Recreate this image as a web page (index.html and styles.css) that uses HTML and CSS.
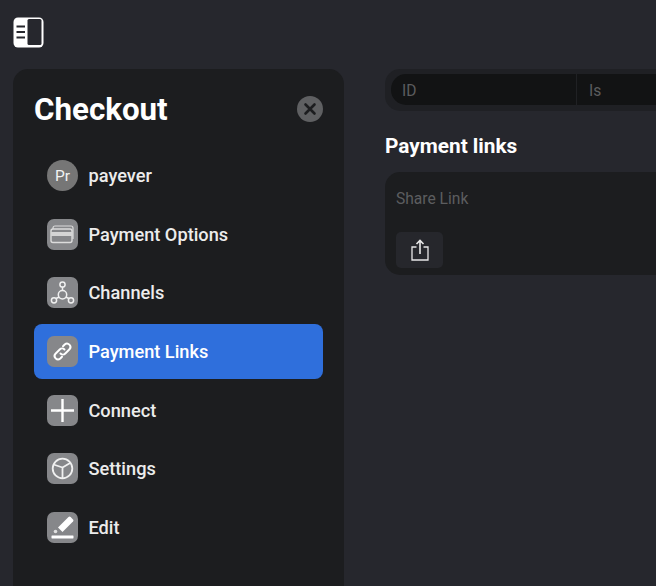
FILE: index.html
```html
<!DOCTYPE html>
<html lang="en">
<head>
<meta charset="utf-8">
<title>Checkout</title>
<link rel="stylesheet" href="styles.css">
</head>
<body>
<header class="topbar">
  <svg class="panel-icon" viewBox="0 0 31 31" width="31" height="31">
    <rect x="0.500" y="0.500" width="30" height="30" rx="4.500" fill="#fff"/>
    <rect x="14.500" y="2" width="14" height="26" rx="1.500" fill="#26272d"/>
    <path d="M3.500 9.400h8.500M3.500 15h8.500M3.500 20.400h8.500" stroke="#26272d" stroke-width="2" fill="none"/>
  </svg>
</header>
<div class="layout">
  <aside class="sidebar">
    <div class="side-head">
      <h1 class="side-title">Checkout</h1>
      <button class="close-btn" aria-label="Close">
        <svg viewBox="0 0 26 26" width="26" height="26"><path d="M8.500 8.500l9 9M17.500 8.500l-9 9" stroke="#1c1d1f" stroke-width="2.600" stroke-linecap="round" fill="none"/></svg>
      </button>
    </div>
    <nav class="menu">
      <a class="item"><span class="ico ico-round">Pr</span><span class="label">payever</span></a>
      <a class="item"><span class="ico">
        <svg viewBox="0 0 31 31" width="31" height="31" fill="none" stroke="#dcdcdc"><path d="M6 10V9a2 2 0 0 1 2-2h16a2 2 0 0 1 2 2v11" stroke-width="1.200"/><rect x="4" y="10" width="21" height="13.500" rx="2" stroke-width="1.400"/><rect x="4" y="13" width="21" height="4" fill="#d4d4d4" stroke="none"/></svg>
      </span><span class="label">Payment Options</span></a>
      <a class="item"><span class="ico">
        <svg viewBox="0 0 31 31" width="31" height="31" fill="none" stroke="#f0f0f0" stroke-width="1.500"><circle cx="15.500" cy="7.500" r="2.600"/><circle cx="7" cy="23.300" r="2.600"/><circle cx="24" cy="23.300" r="2.600"/><path d="M15.500 10.100v3.400M12.300 20l-3.200 1.500M18.700 20l3.200 1.500"/><circle cx="15.500" cy="17.700" r="4.200"/></svg>
      </span><span class="label">Channels</span></a>
      <a class="item item-active"><span class="ico">
        <svg viewBox="0 0 31 31" width="31" height="31" fill="none" stroke="#fff" stroke-width="2" stroke-linecap="round" stroke-linejoin="round"><path d="M13.500 17.500a3.400 3.400 0 0 0 4.800 0l4.200-4.200a3.400 3.400 0 0 0-4.800-4.800l-1.700 1.700"/><path d="M17.500 13.500a3.400 3.400 0 0 0-4.800 0l-4.200 4.200a3.400 3.400 0 0 0 4.800 4.800l1.700-1.700"/></svg>
      </span><span class="label">Payment Links</span></a>
      <a class="item"><span class="ico">
        <svg viewBox="0 0 31 31" width="31" height="31"><path d="M15.500 4v23M4 15.500h23" stroke="#fff" stroke-width="2.400" fill="none"/></svg>
      </span><span class="label">Connect</span></a>
      <a class="item"><span class="ico">
        <svg viewBox="0 0 31 31" width="31" height="31" fill="none" stroke="#f0f0f0" stroke-width="1.800"><circle cx="15.500" cy="15.500" r="9.800"/><path d="M15.500 14.500L6.500 11.500M15.500 14.500L24 9.500M15.500 14.500V25"/></svg>
      </span><span class="label">Settings</span></a>
      <a class="item"><span class="ico">
        <svg viewBox="0 0 31 31" width="31" height="31"><path d="M11 15.500L21.500 5a1.500 1.500 0 0 1 2.100 0l2.400 2.400a1.500 1.500 0 0 1 0 2.100L15.500 20z" fill="#fff"/><circle cx="8.500" cy="19.500" r="1.800" fill="#e0e0e0"/><rect x="4.500" y="23.500" width="22" height="3" rx=".4" fill="#fff"/></svg>
      </span><span class="label">Edit</span></a>
    </nav>
  </aside>
  <main class="content">
    <div class="filter-bar">
      <div class="filter-inner">
        <span class="filter-cell filter-id">ID</span>
        <span class="filter-cell filter-is">Is</span>
      </div>
    </div>
    <h2 class="section-title">Payment links</h2>
    <section class="link-card">
      <div class="link-label">Share Link</div>
      <button class="share-btn" aria-label="Share">
        <svg viewBox="0 0 18 22" width="18" height="22" fill="none" stroke="#e8e8e8" stroke-width="1.300"><path d="M5.500 8H1v13h16V8h-4.500"/><path d="M9 15V1.500M5.500 5L9 1.500 12.500 5" stroke-width="1.600"/></svg>
      </button>
    </section>
  </main>
</div>
</body>
</html>
```
FILE: styles.css
```css
* { box-sizing: border-box; }
html, body { height: 100%; }
body {
  margin: 0;
  background: #26272d;
  font-family: Roboto, "Liberation Sans", sans-serif;
  color: #fff;
  overflow: hidden;
}
.topbar {
  height: 69px;
  padding: 17px 0 0 13px;
}
.panel-icon { display: block; }
.layout {
  display: flex;
  gap: 41px;
  height: 517px;
}
.sidebar {
  flex: none;
  width: 331px;
  margin-left: 13px;
  background: #1c1d1f;
  border-radius: 15px 15px 0 0;
  padding: 0 21px;
}
.side-head {
  display: flex;
  align-items: center;
  justify-content: space-between;
  height: 40px;
  margin-top: 20px;
}
.side-title {
  margin: 0;
  padding-top: 2px;
  font-size: 31.300px;
  font-weight: 700;
  line-height: 40px;
  color: #fff;
}
.close-btn {
  width: 26px;
  height: 26px;
  padding: 0;
  border: 0;
  border-radius: 50%;
  background: #5f6062;
  display: flex;
}
.menu {
  display: flex;
  flex-direction: column;
  gap: 3.670px;
  margin-top: 19px;
  width: 289px;
}
.item {
  display: flex;
  align-items: center;
  gap: 10.500px;
  height: 55px;
  padding-left: 13px;
  border-radius: 8px;
}
.item-active { background: #2f6fdc; }
.ico {
  flex: none;
  width: 31px;
  height: 31px;
  border-radius: 7px;
  background: #86878a;
  display: flex;
  align-items: center;
  justify-content: center;
}
.ico-round {
  border-radius: 50%;
  background: #767676;
  font-size: 15.500px;
  font-weight: 400;
  color: #f2f2f2;
}
.label {
  font-size: 18.200px;
  line-height: 22px;
  padding-top: 1px;
  font-weight: 500;
  color: #ececec;
}
.item-active .label { color: #fff; }
.content {
  flex: 1;
  min-width: 0;
}
.filter-bar {
  height: 42px;
  padding: 5px 0 6px 6px;
  background: #1f2024;
  border-radius: 15px 0 0 15px;
}
.filter-inner {
  height: 31px;
  background: #121314;
  border-radius: 15px 0 0 15px;
  display: flex;
  align-items: stretch;
}
.filter-cell {
  font-size: 15.600px;
  color: #5c5d5f;
  display: flex;
  align-items: center;
  padding-top: 3px;
}
.filter-id {
  width: 186px;
  padding-left: 11px;
  border-right: 1px solid #202124;
}
.filter-is { padding-left: 12px; }
.section-title {
  margin: 21px 0 0;
  font-size: 20.800px;
  font-weight: 700;
  line-height: 28px;
  color: #fff;
}
.link-card {
  margin-top: 12px;
  height: 103px;
  padding: 17px 0 0 11px;
  background: #1c1d1f;
  border-radius: 15px 0 0 15px;
}
.link-label {
  font-size: 15.600px;
  line-height: 20px;
  color: #5c5d5f;
}
.share-btn {
  margin-top: 23px;
  width: 47px;
  height: 36px;
  padding: 0;
  border: 0;
  border-radius: 5px;
  background: #26272c;
  display: flex;
  align-items: center;
  justify-content: center;
}
```
